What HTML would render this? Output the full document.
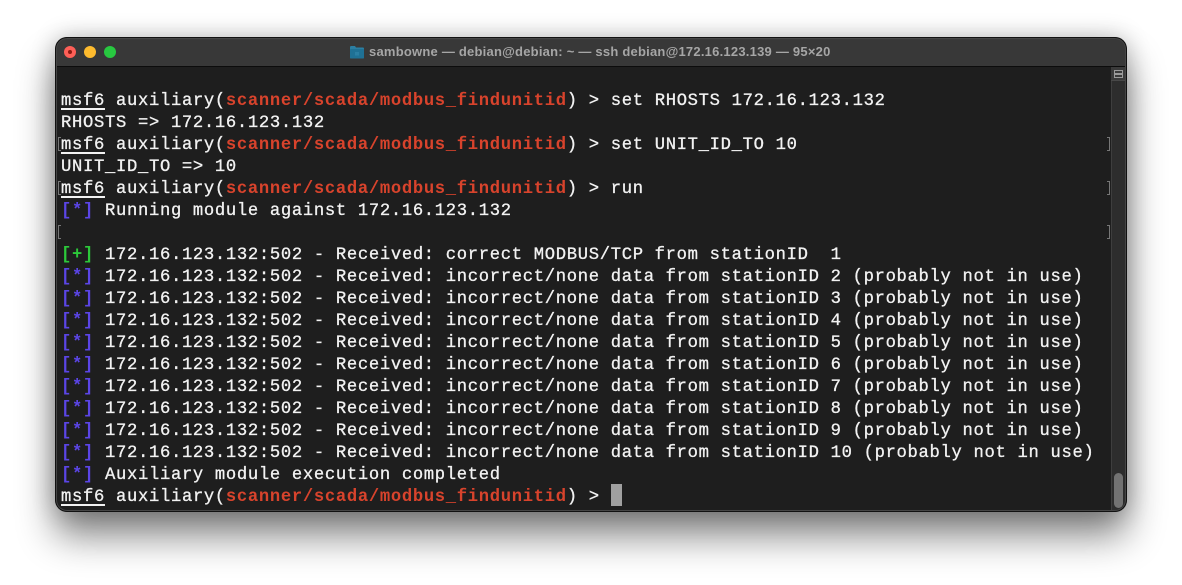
<!DOCTYPE html>
<html><head><meta charset="utf-8">
<style>
html,body{margin:0;padding:0;background:#fff;}
body{width:1182px;height:585px;overflow:hidden;position:relative;font-family:"Liberation Mono",monospace;}
#win{position:absolute;left:55px;top:37px;width:1072px;height:475px;border-radius:12px;background:#1e1e1e;box-shadow:0 24px 38px rgba(0,0,0,.48),0 0 24px rgba(0,0,0,.24);overflow:hidden;}
#win:after{content:"";position:absolute;inset:0;border-radius:12px;border:1px solid #111;box-shadow:inset 0 0 0 1px #454545;box-sizing:border-box;pointer-events:none;}
#in{position:absolute;left:1px;top:1px;width:1070px;height:473px;}
#bar{position:absolute;left:0;top:0;width:1070px;height:28px;background:#383838;border-bottom:1px solid #0c0c0c;}
.dot{position:absolute;top:8px;width:12px;height:12px;border-radius:50%;}
#title{position:absolute;left:313px;top:6px;font:bold 13px/16px "Liberation Sans",sans-serif;letter-spacing:.226px;color:#a6a6a6;white-space:pre;}
#sb{position:absolute;left:1055px;top:29px;width:15px;height:444px;background:#2d2d2d;border-left:1px solid #3e3e3e;box-sizing:border-box;}
#thumb{position:absolute;left:1058px;top:435px;width:9px;height:35px;border-radius:4.5px;background:#727272;}
#split{position:absolute;left:1055px;top:29px;width:15px;height:14px;background:#3a3a3a;border-bottom:1px solid #484848;box-sizing:border-box;}
.l{position:absolute;left:5px;height:22px;line-height:22px;font-size:17.2px;letter-spacing:.68px;color:#f2f2f2;white-space:pre;font-weight:400;-webkit-text-stroke:.3px #f2f2f2;}
.u{text-decoration:underline;text-underline-offset:3px;text-decoration-thickness:1.5px;}
.r{color:#d8432c;font-weight:bold;-webkit-text-stroke:0;}
.b{color:#5b45e6;font-weight:bold;-webkit-text-stroke:0;}
.g{color:#2cc93a;font-weight:bold;-webkit-text-stroke:0;}
.mk{position:absolute;width:3px;height:14px;border:1px solid #777;box-sizing:border-box;}
.ml{left:2px;border-right:0;}
.mr{left:1051px;border-left:0;}
</style></head>
<body>
<div id="win"><div id="in">
  <div id="bar"></div>
  <div class="dot" style="left:8px;background:#fe5f57;"></div>
  <div style="position:absolute;left:12px;top:12px;width:4px;height:4px;border-radius:50%;background:#8c1a12;"></div>
  <div class="dot" style="left:28px;background:#febb2e;"></div>
  <div class="dot" style="left:48px;background:#28c840;"></div>
  <svg style="position:absolute;left:294px;top:7px" width="14" height="14" viewBox="0 0 14 14"><path d="M0 2.5Q0 1 1 1H5L6 2.5H13Q14 2.5 14 3.5V12.5Q14 13.5 13 13.5H1Q0 13.5 0 12.5Z" fill="#2b7fa3"/><rect x="0" y="4" width="14" height="9.5" rx="1" fill="#1f7195"/><rect x="5" y="7" width="4" height="3.5" fill="#2b7fa3"/></svg>
  <div id="title">sambowne — debian@debian: ~ — ssh debian@172.16.123.139 — 95×20</div>

  <div class="l" style="top:53px"><span class="u">msf6</span> auxiliary(<span class="r">scanner/scada/modbus_findunitid</span>) &gt; set RHOSTS 172.16.123.132</div>
  <div class="l" style="top:75px">RHOSTS =&gt; 172.16.123.132</div>
  <div class="l" style="top:97px"><span class="u">msf6</span> auxiliary(<span class="r">scanner/scada/modbus_findunitid</span>) &gt; set UNIT_ID_TO 10</div>
  <div class="l" style="top:119px">UNIT_ID_TO =&gt; 10</div>
  <div class="l" style="top:141px"><span class="u">msf6</span> auxiliary(<span class="r">scanner/scada/modbus_findunitid</span>) &gt; run</div>
  <div class="l" style="top:163px"><span class="b">[*]</span> Running module against 172.16.123.132</div>
  <div class="l" style="top:207px"><span class="g">[+]</span> 172.16.123.132:502 - Received: correct MODBUS/TCP from stationID  1</div>
  <div class="l" style="top:229px"><span class="b">[*]</span> 172.16.123.132:502 - Received: incorrect/none data from stationID 2 (probably not in use)</div>
  <div class="l" style="top:251px"><span class="b">[*]</span> 172.16.123.132:502 - Received: incorrect/none data from stationID 3 (probably not in use)</div>
  <div class="l" style="top:273px"><span class="b">[*]</span> 172.16.123.132:502 - Received: incorrect/none data from stationID 4 (probably not in use)</div>
  <div class="l" style="top:295px"><span class="b">[*]</span> 172.16.123.132:502 - Received: incorrect/none data from stationID 5 (probably not in use)</div>
  <div class="l" style="top:317px"><span class="b">[*]</span> 172.16.123.132:502 - Received: incorrect/none data from stationID 6 (probably not in use)</div>
  <div class="l" style="top:339px"><span class="b">[*]</span> 172.16.123.132:502 - Received: incorrect/none data from stationID 7 (probably not in use)</div>
  <div class="l" style="top:361px"><span class="b">[*]</span> 172.16.123.132:502 - Received: incorrect/none data from stationID 8 (probably not in use)</div>
  <div class="l" style="top:383px"><span class="b">[*]</span> 172.16.123.132:502 - Received: incorrect/none data from stationID 9 (probably not in use)</div>
  <div class="l" style="top:405px"><span class="b">[*]</span> 172.16.123.132:502 - Received: incorrect/none data from stationID 10 (probably not in use)</div>
  <div class="l" style="top:427px"><span class="b">[*]</span> Auxiliary module execution completed</div>
  <div class="l" style="top:449px"><span class="u">msf6</span> auxiliary(<span class="r">scanner/scada/modbus_findunitid</span>) &gt;</div>
  <div style="position:absolute;left:555px;top:446px;width:11px;height:22px;background:#a0a0a0;"></div>

  <div class="mk ml" style="top:99px"></div>
  <div class="mk ml" style="top:143px"></div>
  <div class="mk ml" style="top:187px"></div>
  <div class="mk mr" style="top:99px"></div>
  <div class="mk mr" style="top:143px"></div>
  <div class="mk mr" style="top:187px"></div>

  <div id="sb"></div>
  <div id="split"></div>
  <svg style="position:absolute;left:1058px;top:31px" width="10" height="10" viewBox="0 0 10 10"><path d="M.5 1.5H8.5V4.5H.5ZM.5 5.5H8.5V8.5H.5Z" fill="none" stroke="#9a9a9a" stroke-width="1"/></svg>
  <div id="thumb"></div>
</div></div>
</body></html>
